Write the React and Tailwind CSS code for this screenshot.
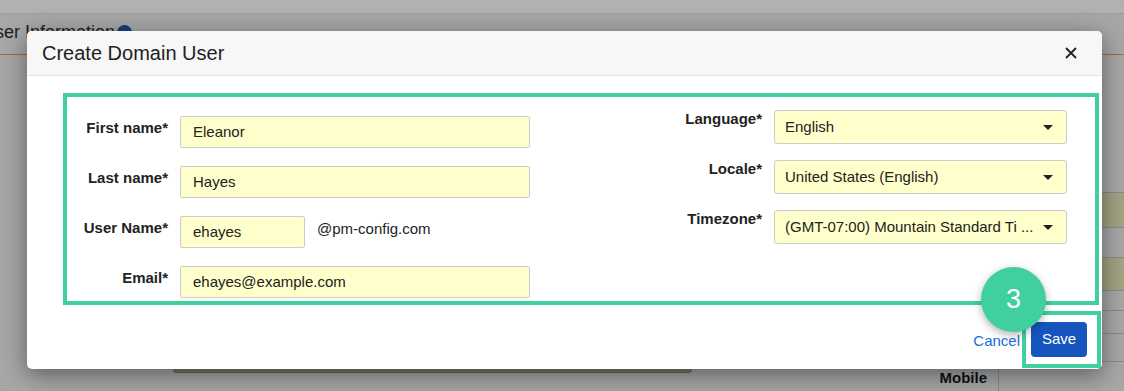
import React from 'react';

const leftFields = [
  { label: 'First name', value: 'Eleanor', width: 'w-[350px]' },
  { label: 'Last name', value: 'Hayes', width: 'w-[350px]' },
  { label: 'User Name', value: 'ehayes', width: 'w-[125px]', suffix: '@pm-config.com' },
  { label: 'Email', value: 'ehayes@example.com', width: 'w-[350px]' },
];

const rightFields = [
  { label: 'Language', value: 'English' },
  { label: 'Locale', value: 'United States (English)' },
  { label: 'Timezone', value: '(GMT-07:00) Mountain Standard Ti ...' },
];

const Caret = () => (
  <svg width="10" height="5" viewBox="0 0 10 5" className="shrink-0">
    <path d="M0 0 L10 0 L5 5 Z" fill="#222" />
  </svg>
);

const App = () => {
  return (
    <div className="relative w-[1124px] h-[391px] overflow-hidden bg-[#a7a7a7] font-['Liberation_Sans',Arial,sans-serif]">
      {/* page behind the modal backdrop */}
      <div className="flex flex-col h-full">
        <div className="h-[14px] bg-[#b1b1b1] border-b border-[#9c9c9c]" />
        <div className="h-[41px] flex items-center gap-[2px] -ml-[18px] pb-[4px] border-b border-[#b8681f]">
          <span className="text-[18px] leading-[20px] text-[#1e1e1e]">User Information</span>
          <span className="w-[15px] h-[15px] rounded-full bg-[#153f7e]" />
        </div>
        <div className="flex-1 flex">
          <div className="flex-1 flex flex-col border-r border-[#8a8a8a]">
            <div className="flex-1" />
            <div className="h-[30px] flex items-start">
              <div className="ml-[173px] w-[519px] h-[12px] bg-[#7d7b62] border border-[#6a6a5a] rounded-b-[3px]" />
              <div className="ml-auto pr-[11px] pt-[8px] text-[15px] leading-[17px] font-bold text-[#111]">Mobile</div>
            </div>
          </div>
          <div className="w-[125px] flex flex-col">
            <div className="h-[137px]" />
            <div className="h-[35px] border-t border-[#8a8a8a] bg-[#a4a383]" />
            <div className="h-[30px] border-t border-[#8a8a8a]" />
            <div className="h-[33px] border-t border-[#8a8a8a] bg-[#a4a383]" />
            <div className="h-[20px] border-t border-[#8a8a8a]" />
            <div className="h-[23px] border-t border-[#8a8a8a]" />
            <div className="h-[28px] border-t border-[#8a8a8a]" />
            <div className="flex-1 border-t border-[#8a8a8a]" />
          </div>
        </div>
      </div>

      {/* modal */}
      <div className="absolute left-[27px] top-[31px] w-[1075px] rounded-[5px] bg-white shadow-[0_6px_24px_rgba(0,0,0,0.45)]">
        <div className="h-[45px] flex items-center justify-between pl-[15px] pr-[25px] bg-[#f7f7f7] border-b border-[#e5e5e5] rounded-t-[5px]">
          <h2 className="text-[20px] text-[#222]">Create Domain User</h2>
          <svg width="12" height="12" viewBox="0 0 12 12">
            <path d="M1 1 L11 11 M11 1 L1 11" stroke="#222" strokeWidth="1.8" />
          </svg>
        </div>

        <div className="mt-[17px] ml-[36px] w-[1036px] h-[212px] border-4 border-[#40d09f] flex">
          {/* left column */}
          <div className="flex flex-col gap-[18px] pt-[19px]">
            {leftFields.map((f) => (
              <div key={f.label} className="flex items-start gap-[12px]">
                <label className="w-[101px] text-right pt-[3px] text-[15px] leading-[17px] font-bold text-[#222]">
                  {f.label}*
                </label>
                <div className={`${f.width} h-[32px] flex items-center px-[12px] bg-[#ffffcc] border border-[#cccccc] rounded-[2px] text-[15px] text-[#222]`}>
                  {f.value}
                </div>
                {f.suffix && (
                  <span className="pt-[4px] text-[15px] leading-[17px] text-[#222]">{f.suffix}</span>
                )}
              </div>
            ))}
          </div>

          {/* right column */}
          <div className="ml-auto flex flex-col gap-[16px] pt-[13px] pr-[28px]">
            {rightFields.map((f) => (
              <div key={f.label} className="flex items-start gap-[12px]">
                <label className="w-[100px] text-right text-[15px] leading-[17px] font-bold text-[#222]">
                  {f.label}*
                </label>
                <div className="w-[293px] h-[34px] flex items-center justify-between pl-[10px] pr-[13px] bg-[#ffffcc] border border-[#cccccc] rounded-[3px] text-[15px] text-[#222]">
                  <span className="whitespace-nowrap overflow-hidden">{f.value}</span>
                  <Caret />
                </div>
              </div>
            ))}
          </div>
        </div>

        <div className="h-[64px] flex justify-end items-end pr-[1px] pb-[1px]">
          <a className="mb-[19px] mr-[2px] text-[15px] leading-[17px] text-[#1a6fd6]">Cancel</a>
          <div className="w-[79px] h-[57px] border-4 border-[#40d09f] pl-[5px] pt-[7px]">
            <button className="w-[56px] h-[35px] rounded-[4px] bg-[#1655bd] text-white text-[15px]">Save</button>
          </div>
        </div>

        {/* step marker */}
        <div className="absolute left-[954px] top-[236px] z-10 w-[65px] h-[65px] rounded-full bg-[#40d09f] shadow-[0_3px_8px_rgba(0,0,0,0.3)] flex items-center justify-center text-white text-[27px]">
          3
        </div>
      </div>
    </div>
  );
};

export default App;
